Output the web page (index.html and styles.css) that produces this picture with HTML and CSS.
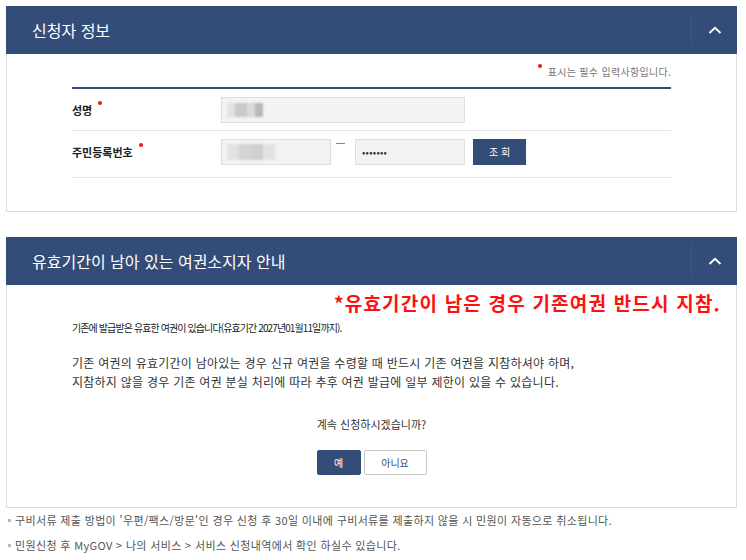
FILE: index.html
```html
<!DOCTYPE html>
<html lang="ko">
<head>
<meta charset="utf-8">
<title>신청자 정보</title>
<link rel="stylesheet" href="styles.css">
</head>
<body>
<div class="page">
  <section class="panel panel-applicant">
    <header class="panel-head">
      <h2 class="panel-title">신청자 정보</h2>
      <button class="toggle" type="button" aria-label="접기">
        <svg width="14" height="8" viewBox="0 0 14 8"><path d="M1.5 7 L7 1.8 L12.5 7" fill="none" stroke="#fff" stroke-width="1.8"/></svg>
      </button>
    </header>
    <div class="panel-body form-body">
      <p class="req-note"><span class="dot"></span>표시는 필수 입력사항입니다.</p>
      <div class="form-table">
        <div class="form-row row-name">
          <div class="label">성명<span class="dot dot-label"></span></div>
          <div class="field">
            <div class="input input-wide"><span class="blur blur-name"><i class="b1"></i><i class="b2"></i><i class="b3"></i><i class="b4"></i></span></div>
          </div>
        </div>
        <div class="form-row row-id">
          <div class="label">주민등록번호<span class="dot dot-label"></span></div>
          <div class="field">
            <div class="input input-half"><span class="blur blur-id"><i class="b2"></i><i class="b1"></i><i class="b3"></i><i class="b2"></i></span></div>
            <span class="dash"></span>
            <div class="input input-half"><span class="pw">•••••••</span></div>
            <button class="btn-search" type="button">조 회</button>
          </div>
        </div>
      </div>
    </div>
  </section>

  <section class="panel panel-notice">
    <header class="panel-head">
      <h2 class="panel-title">유효기간이 남아 있는 여권소지자 안내</h2>
      <button class="toggle" type="button" aria-label="접기">
        <svg width="14" height="8" viewBox="0 0 14 8"><path d="M1.5 7 L7 1.8 L12.5 7" fill="none" stroke="#fff" stroke-width="1.8"/></svg>
      </button>
    </header>
    <div class="panel-body notice-body">
      <p class="warn">*유효기간이 남은 경우 기존여권 반드시 지참.</p>
      <p class="has-passport">기존에 발급받은 유효한 여권이 있습니다(유효기간 2027년01월11일까지).</p>
      <p class="desc">기존 여권의 유효기간이 남아있는 경우 신규 여권을 수령할 때 반드시 기존 여권을 지참하셔야 하며,<br>지참하지 않을 경우 기존 여권 분실 처리에 따라 추후 여권 발급에 일부 제한이 있을 수 있습니다.</p>
      <p class="question">계속 신청하시겠습니까?</p>
      <div class="actions">
        <button class="btn btn-yes" type="button">예</button>
        <button class="btn btn-no" type="button">아니요</button>
      </div>
    </div>
  </section>

  <ul class="notes">
    <li>구비서류 제출 방법이 '우편/팩스/방문'인 경우 신청 후 30일 이내에 구비서류를 제출하지 않을 시 민원이 자동으로 취소됩니다.</li>
    <li>민원신청 후 MyGOV &gt; 나의 서비스 &gt; 서비스 신청내역에서 확인 하실수 있습니다.</li>
  </ul>
</div>
</body>
</html>
```

FILE: styles.css
```css
* { box-sizing: border-box; }
html, body { margin: 0; padding: 0; background: #fff; }
body {
  font-family: "Noto Sans CJK KR", "Noto Sans", "Liberation Sans", sans-serif;
  color: #333;
}
p { margin: 0; }
.page {
  padding: 6px 9px 0 6px;
}
.panel {
  border: 1px solid #dcdcdc;
  border-top: 0;
  background: #fff;
}
.panel-notice { margin-top: 25px; }
.panel-head {
  height: 48px;
  margin: 0 -1px;
  background: #344d78;
  display: flex;
  align-items: center;
  justify-content: space-between;
}
.panel-title {
  margin: 0 0 0 26px;
  font-size: 16px;
  font-weight: 400;
  color: #fff;
  line-height: 1;
}
.toggle {
  width: 46px;
  height: 32px;
  border: 0;
  border-left: 1px solid #3f5885;
  background: transparent;
  display: flex;
  align-items: center;
  justify-content: center;
  padding: 0;
  margin-right: 0;
}

/* form panel */
.form-body {
  padding: 0 65px 33px 65px;
}
.req-note {
  height: 33px;
  display: flex;
  align-items: center;
  justify-content: flex-end;
  font-size: 10px;
  color: #777;
  padding-top: 1px;
  letter-spacing: 0.3px;
}
.dot {
  display: inline-block;
  width: 4px;
  height: 4px;
  border-radius: 50%;
  background: #f2121b;
  vertical-align: 6px;
  margin-right: 6px;
}
.req-note .dot { align-self: flex-start; margin-top: 9px; }
.form-table {
  border-top: 2px solid #344d78;
}
.form-row {
  display: flex;
  align-items: center;
  border-bottom: 1px solid #e6e6e6;
}
.row-name { height: 42px; }
.row-id { height: 47px; padding-bottom: 5px; }
.label {
  width: 149px;
  font-size: 11px;
  font-weight: 700;
  color: #222;
}
.dot-label {
  margin: 0 0 0 6px;
  vertical-align: 10px;
}
.field {
  display: flex;
  align-items: center;
}
.input {
  height: 26px;
  background: #f3f3f3;
  border: 1px solid #dedede;
  display: flex;
  align-items: center;
  padding-left: 5px;
}
.input-wide { width: 244px; }
.input-half { width: 110px; }
.dash {
  width: 9px;
  height: 1px;
  background: #888;
  margin: 0 10px 0 5px;
  align-self: flex-start;
  margin-top: 4px;
}
.blur {
  display: flex;
  filter: blur(1.2px);
}
.blur i {
  display: block;
  height: 14px;
}
.blur-name i.b1 { width: 8px; background: #e2e2e2; }
.blur-name i.b2 { width: 12px; background: #c9c9c9; }
.blur-name i.b3 { width: 8px; background: #dadada; }
.blur-name i.b4 { width: 8px; background: #b8b8b8; }
.blur-id i { height: 16px; }
.blur-id i.b1 { width: 12px; background: #d4d4d4; }
.blur-id i.b2 { width: 12px; background: #e2e2e2; }
.blur-id i.b3 { width: 12px; background: #cfcfcf; }
.pw {
  font-size: 10px;
  color: #333;
  letter-spacing: 0.2px;
  padding-left: 1px;
}
.btn-search {
  margin-left: 8px;
  width: 53px;
  height: 26px;
  border: 0;
  background: #344d78;
  color: #fff;
  font-family: inherit;
  font-size: 10px;
  padding: 0;
}

/* notice panel */
.notice-body {
  padding: 6px 15px 32px 65px;
}
.warn {
  text-align: right;
  color: #ff1010;
  font-size: 19px;
  font-weight: 700;
  line-height: 24px;
  letter-spacing: 1.2px;
}
.has-passport {
  margin-top: 6px;
  font-size: 10px;
  letter-spacing: -0.9px;
  color: #222;
  line-height: 14px;
}
.desc {
  margin-top: 18px;
  font-size: 12px;
  line-height: 19px;
  color: #333;
  letter-spacing: 0.25px;
}
.question {
  margin-top: 25px;
  margin-left: -50px;
  text-align: center;
  font-size: 11px;
  color: #333;
  line-height: 16px;
}
.actions {
  margin-top: 18px;
  margin-left: -50px;
  display: flex;
  justify-content: center;
  gap: 3px;
}
.btn {
  height: 25px;
  border-radius: 2px;
  font-family: inherit;
  font-size: 10px;
  padding: 0;
}
.btn-yes {
  width: 44px;
  background: #344d78;
  border: 1px solid #344d78;
  color: #fff;
}
.btn-no {
  width: 63px;
  background: #fff;
  border: 1px solid #c8c8c8;
  color: #344d78;
}

/* notes */
.notes {
  list-style: none;
  margin: 4px 0 0 0;
  padding: 0;
}
.notes li {
  position: relative;
  padding-left: 9px;
  font-size: 11px;
  color: #555;
  line-height: 16px;
  margin-bottom: 9px;
  letter-spacing: 0.35px;
}
.notes li::before {
  content: "";
  position: absolute;
  left: 2px;
  top: 7px;
  width: 3px;
  height: 3px;
  background: #bbb;
}
```
